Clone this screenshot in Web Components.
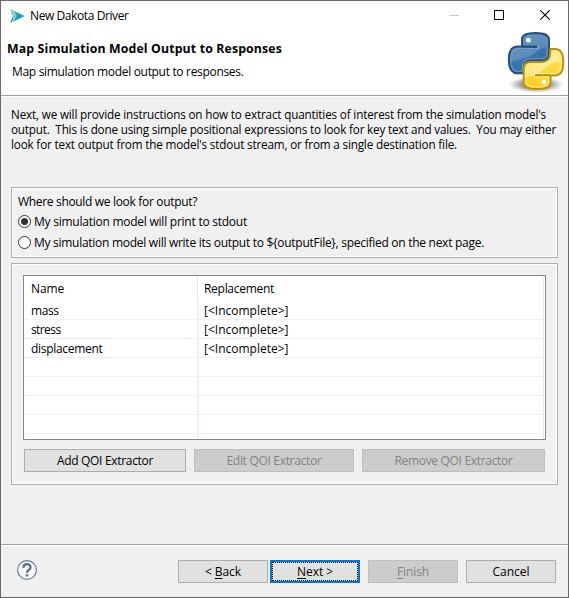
<!DOCTYPE html>
<html lang="en">
<head>
<meta charset="utf-8">
<title>New Dakota Driver</title>
<style>
html, body { margin: 0; padding: 0; }
body { width: 569px; height: 598px; overflow: hidden; font: 12px/15px "Open Sans", "Noto Sans", sans-serif; color: #000; background: #f0f0f0; }
</style>
</head>
<body>
<wizard-window>
  <title-bar slot="title"><fit-text w="98.5">New Dakota Driver</fit-text></title-bar>
  <wizard-header slot="header">
    <fit-text slot="heading" w="275">Map Simulation Model Output to Responses</fit-text>
    <fit-text slot="message" w="231.5">Map simulation model output to responses.</fit-text>
  </wizard-header>
  <intro-text slot="body">
    <fit-text w="535">Next, we will provide instructions on how to extract quantities of interest from the simulation model's</fit-text>
    <fit-text w="545">output.&nbsp; This is done using simple positional expressions to look for key text and values.&nbsp; You may either</fit-text>
    <fit-text w="446">look for text output from the model's stdout stream, or from a single destination file.</fit-text>
  </intro-text>
  <group-box slot="body" style="height:71px; margin-top:35px">
    <radio-group>
      <fit-text slot="label" w="179">Where should we look for output?</fit-text>
      <radio-option checked><fit-text w="213">My simulation model will print to stdout</fit-text></radio-option>
      <radio-option><fit-text w="450">My simulation model will write its output to ${outputFile}, specified on the next page.</fit-text></radio-option>
    </radio-group>
  </group-box>
  <group-box slot="body" style="height:222px; margin-top:5px">
    <data-table></data-table>
    <button-row style="padding:9px 0 0 11px">
      <push-button style="width:162px"><fit-text w="96">Add QOI Extractor</fit-text></push-button>
      <push-button disabled style="width:160px"><fit-text w="95">Edit QOI Extractor</fit-text></push-button>
      <push-button disabled style="width:183px"><fit-text w="118">Remove QOI Extractor</fit-text></push-button>
    </button-row>
  </group-box>
  <help-button slot="footer"></help-button>
  <button-row slot="footer">
    <push-button style="width:90px; margin-right:-6px"><fit-text w="36">&lt; <u>B</u>ack</fit-text></push-button>
    <push-button focused style="width:90px"><fit-text w="36"><u>N</u>ext &gt;</fit-text></push-button>
    <push-button disabled style="width:90px"><fit-text w="32"><u>F</u>inish</fit-text></push-button>
    <push-button style="width:90px"><fit-text w="37">Cancel</fit-text></push-button>
  </button-row>
</wizard-window>

<script>
const define = (name, html, extra) => {
  const tpl = document.createElement('template');
  tpl.innerHTML = html;
  customElements.define(name, class extends HTMLElement {
    constructor() {
      super();
      this.attachShadow({ mode: 'open' }).append(tpl.content.cloneNode(true));
    }
    connectedCallback() { if (extra) extra(this); }
  });
};

define('wizard-window', `<style>
:host { display: flex; flex-direction: column; box-sizing: border-box; width: 569px; height: 598px; border: 1px solid #69696b; background: #f0f0f0; }
.body { flex: 1; padding: 9px 10px 0; }
.footer { display: flex; justify-content: space-between; align-items: flex-start; box-sizing: border-box; height: 53px; border-top: 1px solid #a0a0a0; box-shadow: inset 0 1px #fff; padding: 15px 12px 0 15px; }
</style><slot name="title"></slot><slot name="header"></slot><div class="body"><slot name="body"></slot></div><div class="footer"><slot name="footer"></slot></div>`);

define('title-bar', `<style>
:host { display: flex; align-items: center; height: 29px; background: #fff; padding: 0 17px 0 8px; }
.name { flex: 1; padding-left: 5px; }
.controls { display: flex; gap: 35px; }
svg { display: block; }
.close { margin-left: 1px; }
</style>
<svg width="16" height="16" viewBox="0 0 16 16"><defs><linearGradient id="g" x2="0" y2="1"><stop stop-color="#47c3d4"/><stop offset="1" stop-color="#127f9d"/></linearGradient></defs><path d="M1.2.7 15.8 8 1.2 15 3.9 8Z" fill="url(#g)"/><path d="M2 1.2 7.2 8 2.4 14.5M4.8 3.2v9.5" fill="none" stroke="#e9fafc" stroke-width=".8"/><path d="M7 5.3 12.5 8 7 10.8 8.4 8Z" fill="#2799b2"/></svg>
<span class="name"><slot></slot></span>
<div class="controls">
<svg width="10" height="11"><path d="M0 5.500h10" stroke="#c9c9c9"/></svg>
<svg width="10" height="11"><path d="M.5.5h9v9h-9z" fill="none" stroke="#000"/></svg>
<svg class="close" width="11" height="11"><path d="M.3.3 9.700 9.700M9.700.3.3 9.700" stroke="#000" stroke-width="1.1"/></svg>
</div>`);

define('wizard-header', `<style>
:host { display: flex; justify-content: space-between; box-sizing: border-box; height: 66px; background: #fff; border-bottom: 1px solid #a0a0a0; box-shadow: 0 1px #fff; padding: 1px 2px 0 6px; }
.texts { display: flex; flex-direction: column; gap: 8px; padding-top: 10px; }
.heading { font-weight: 700; font-size: 12.300px; }
.message { padding-left: 5px; }
svg { display: block; }
</style>
<div class="texts"><div class="heading"><slot name="heading"></slot></div><div class="message"><slot name="message"></slot></div></div>
<svg width="60" height="63" viewBox="506 31 60 63">
<defs>
<linearGradient id="b" x1="0" y1="0" x2=".6" y2="1"><stop stop-color="#4a80ae"/><stop offset="1" stop-color="#2f6da8"/></linearGradient>
<linearGradient id="y" x1="0" y1="1" x2=".3" y2="0"><stop stop-color="#ffcb20"/><stop offset="1" stop-color="#ffe04d"/></linearGradient>
<radialGradient id="s"><stop stop-color="#333" stop-opacity=".85"/><stop offset=".55" stop-color="#555" stop-opacity=".55"/><stop offset="1" stop-color="#888" stop-opacity="0"/></radialGradient>
</defs>
<ellipse cx="536" cy="84.500" rx="28" ry="8.500" fill="url(#s)"/>
<g stroke-width="1.900" stroke-linejoin="round">
<path d="M522 46.500V39Q522 33 535.500 33 549 33 549 39.500V53Q549 60.500 541.500 60.500H531Q524 60.500 524 68V73.300H517.500Q508.800 73.300 508.800 59.500 508.800 46.500 517.500 46.500Z" fill="url(#b)" stroke="#264e76"/>
<path d="M550.500 49H555Q563.300 49 563.300 62.500 563.300 75.500 555 75.500H550.500V83Q550.500 89 537 89 523.700 89 523.700 82.500V69Q523.700 62 531 62H541.500Q550 62 550 54Z" fill="url(#y)" stroke="#b9920a"/>
</g>
<g fill="none" stroke-width="1.100">
<path d="M523.800 45V39.500Q524 35 535.500 35 547.200 35 547.200 40V53Q547.200 58.700 541.500 58.700H530.500Q522.200 59 522.200 68V71.300H518Q510.700 71.300 510.700 59.500 510.700 48.400 518 48.400H538.500V45.500" stroke="#76a2c7" opacity=".8"/>
<path d="M552 51H555Q561.500 51 561.500 62.500 561.500 73.600 555 73.600H534.500V77.300H548.700V82.500Q548.500 87 537 87 525.500 87 525.500 82V69Q525.700 63.900 531 63.900H541.500Q551 63.700 552 54.500Z" stroke="#ffed8a"/>
</g>
<path d="M511 60Q511 49 518 48.500H537V45H524.500V39Q525 35.500 536 35.500 546.500 35.500 546.700 40V47Q540 48 534 53.500C527 59.500 518 59 511.500 62Z" fill="#fff" opacity=".18"/>
<path d="M526 77V69Q526 64.500 532 64.300 548 64.500 552 56V51.500Q561 50 561 61 551 62 545 68.500 538 75.500 526 77Z" fill="#fff" opacity=".42"/>
<path d="M522 46.900H537" stroke="#264e76" stroke-width="1.900"/><path d="M550 75.100H535" stroke="#b9920a" stroke-width="1.900"/>
<circle cx="528.400" cy="40.200" r="2.400" fill="#fff"/><circle cx="544" cy="82" r="2.400" fill="#fff"/>
</svg>`);

define('intro-text', `<style>:host { display: flex; flex-direction: column; align-items: flex-start; padding: 2px 0 0 0; font-size: 11.690px; }</style><slot></slot>`);

define('group-box', `<style>
:host { display: block; box-sizing: border-box; border: 1px solid #adadad; box-shadow: inset 0 0 0 1px #fff; padding: 11px 0 0 1px; }
</style><slot></slot>`);

define('radio-group', `<style>
:host { display: flex; flex-direction: column; align-items: flex-start; gap: 5px; padding: 0 0 0 5px; margin-top: -5px; }
</style><slot name="label"></slot><slot></slot>`);

define('radio-option', `<style>
:host { display: flex; gap: 3px; height: 16px; align-items: flex-start; }
svg { display: block; margin-top: 1px; }
circle.dot { display: none; }
:host([checked]) .dot { display: inline; }
</style><svg width="13" height="13"><circle cx="6.500" cy="6.500" r="6" fill="#fff" stroke="#333"/><circle class="dot" cx="6.500" cy="6.500" r="3.500" fill="#333"/></svg><slot></slot>`);

define('data-table', `<style>
:host { display: block; box-sizing: border-box; width: 523px; height: 165px; margin-left: 10px; border: 1px solid #828790; background: #fff; padding: 1px; overflow: hidden; }
.row { display: grid; grid-template-columns: 172px 1fr; height: 19px; box-sizing: border-box; width: 519px; border-right: 1px solid #e8e8e8; }
.row > div { box-sizing: border-box; border-bottom: 1px solid #f0f0f0; padding: 2px 0 0 6px; }
.row > div + div { border-left: 2px solid #edf1fa; padding-left: 5px; }
.row.head { height: 24px; }
.row.head > div { border-bottom: 0; padding-top: 4px; }
.row.head > div + div { border-left: 1px solid #e5e5e5; padding-left: 6px; }
.row.tail { height: 5px; }
.row.tail > div { border-bottom: 0; padding-top: 0; }
</style>
<div class="row head"><div><fit-text w="33">Name</fit-text></div><div><fit-text w="70">Replacement</fit-text></div></div>
<div class="row"><div><fit-text w="27.5">mass</fit-text></div><div><fit-text w="84.5">[&lt;Incomplete&gt;]</fit-text></div></div>
<div class="row"><div><fit-text w="29.5">stress</fit-text></div><div><fit-text w="84.5">[&lt;Incomplete&gt;]</fit-text></div></div>
<div class="row"><div><fit-text w="71.5">displacement</fit-text></div><div><fit-text w="84.5">[&lt;Incomplete&gt;]</fit-text></div></div>
<div class="row"><div></div><div></div></div><div class="row"><div></div><div></div></div><div class="row"><div></div><div></div></div><div class="row"><div></div><div></div></div>
<div class="row tail"><div></div><div></div></div>`);

define('button-row', `<style>:host { display: flex; gap: 8px; }</style><slot></slot>`);

define('push-button', `<style>
:host { display: flex; justify-content: center; box-sizing: border-box; height: 23px; border: 1px solid #adadad; background: #e1e1e1; padding-top: 3px; }
:host([disabled]) { background: #ccc; border-color: #bfbfbf; color: #838383; }
:host([focused]) { border: 2px solid #0078d7; padding: 2px 0 0; outline: 1px dotted #000; outline-offset: -3px; }
</style><slot></slot>`);

define('help-button', `<style>:host { display: block; } svg { display: block; }</style>
<svg width="22" height="21" viewBox="0 0 22 21"><circle cx="11" cy="10" r="9.400" fill="#f7f8fa" stroke="#667b95" stroke-width="1.200"/><path d="M7.400 7.700C7.400 2.900 14.700 3 14.500 7.400 14.400 9.800 11 10 11 12.700" fill="none" stroke="#57708f" stroke-width="2.300"/><path d="M9.700 14.300h2.600v2.200H9.700z" fill="#57708f"/></svg>`);

/* Spreads its letters evenly so that the line takes the width in "w". */
define('fit-text', `<style>
:host { display: inline-block; white-space: pre; line-height: 15px; vertical-align: top; }
::slotted(u) { text-decoration: underline; text-underline-offset: 1.500px; text-decoration-thickness: 1px; text-decoration-skip-ink: none; }
</style><slot></slot>`, el => {
  const want = parseFloat(el.getAttribute('w'));
  const have = el.getBoundingClientRect().width;
  el.style.letterSpacing = ((want - have) / el.textContent.length) + 'px';
});
</script>
</body>
</html>
